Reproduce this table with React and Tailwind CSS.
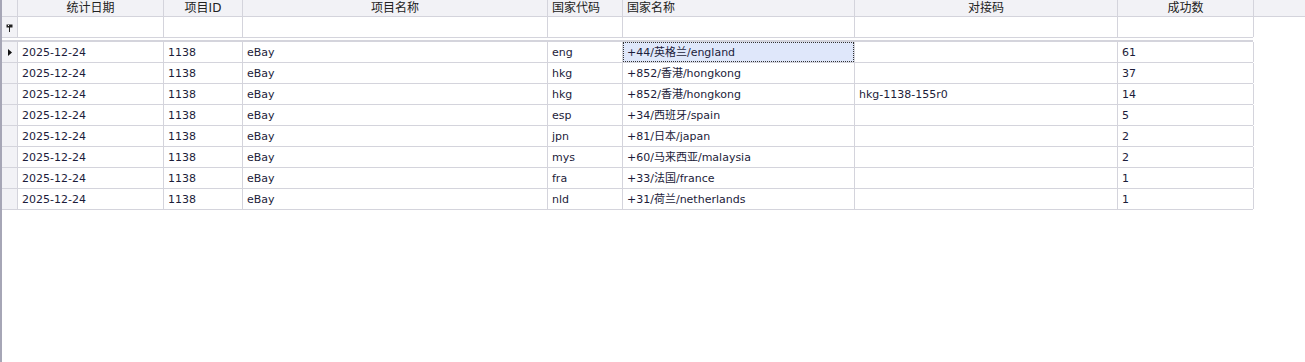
import React from "react";

const columns = [
  { key: "date", title: "统计日期", width: "w-[146px]", align: "text-center" },
  { key: "pid", title: "项目ID", width: "w-[79px]", align: "text-center" },
  { key: "pname", title: "项目名称", width: "w-[305px]", align: "text-center" },
  { key: "code", title: "国家代码", width: "w-[75px]", align: "text-left" },
  { key: "country", title: "国家名称", width: "w-[232px]", align: "text-left" },
  { key: "dock", title: "对接码", width: "w-[263px]", align: "text-center" },
  { key: "count", title: "成功数", width: "w-[136px]", align: "text-center" },
];

const rows = [
  ["2025-12-24", "1138", "eBay", "eng", "+44/英格兰/england", "", "61"],
  ["2025-12-24", "1138", "eBay", "hkg", "+852/香港/hongkong", "", "37"],
  ["2025-12-24", "1138", "eBay", "hkg", "+852/香港/hongkong", "hkg-1138-155r0", "14"],
  ["2025-12-24", "1138", "eBay", "esp", "+34/西班牙/spain", "", "5"],
  ["2025-12-24", "1138", "eBay", "jpn", "+81/日本/japan", "", "2"],
  ["2025-12-24", "1138", "eBay", "mys", "+60/马来西亚/malaysia", "", "2"],
  ["2025-12-24", "1138", "eBay", "fra", "+33/法国/france", "", "1"],
  ["2025-12-24", "1138", "eBay", "nld", "+31/荷兰/netherlands", "", "1"],
];

const font = { fontFamily: '"DejaVu Sans", "Noto Sans CJK SC", sans-serif' };

function FilterPin() {
  return (
    <svg width="7" height="8" viewBox="0 0 7 8">
      <rect x="0.5" y="0.5" width="6" height="3" fill="#222" />
      <rect x="2" y="1" width="1" height="1" fill="#fff" />
      <rect x="3" y="3" width="1" height="5" fill="#222" />
    </svg>
  );
}

function RowArrow() {
  return (
    <svg width="4" height="7" viewBox="0 0 4 7">
      <path d="M0 0 L4 3.5 L0 7 Z" fill="#111" />
    </svg>
  );
}

export default function App() {
  return (
    <div className="flex h-[362px] w-[1305px] bg-white text-[11px] text-[#1c1c3a]" style={font}>
      <div className="w-[2px] shrink-0 bg-[#a6a6b6]" />
      <div className="flex flex-1 flex-col">
        {/* header */}
        <div className="flex h-[17px] border-b border-[#d4d4dc] bg-[#f2f2f6]">
          <div className="w-[16px] shrink-0 border-r border-[#d4d4dc]" />
          {columns.map((c) => (
            <div
              key={c.key}
              className={`${c.width} ${c.align} shrink-0 border-r border-[#d4d4dc] px-[4px] text-[12px] leading-[16px] text-[#222]`}
            >
              {c.title}
            </div>
          ))}
          <div className="flex-1" />
        </div>

        {/* filter row + data */}
        <div className="flex">
          <div className="flex w-[1251px] flex-col">
            <div className="flex h-[21px] border-b border-[#d4d4dc]">
              <div className="flex w-[16px] shrink-0 items-center justify-center border-r border-[#d4d4dc] bg-[#f2f2f6] pt-[1px]">
                <FilterPin />
              </div>
              {columns.map((c) => (
                <div key={c.key} className={`${c.width} shrink-0 border-r border-[#d4d4dc]`} />
              ))}
            </div>
            <div className="h-[2px]" />
            <div className="h-[2px] bg-[#d4d4dc]" />

            {rows.map((r, i) => (
              <div key={i} className="flex h-[21px] border-b border-[#d4d4dc]">
                <div className="flex w-[16px] shrink-0 items-center justify-center border-r border-[#d4d4dc] bg-[#f2f2f6]">
                  {i === 0 && <RowArrow />}
                </div>
                {r.map((v, j) => {
                  const selected = i === 0 && j === 4;
                  return (
                    <div
                      key={j}
                      className={`${columns[j].width} shrink-0 border-r border-[#d4d4dc] leading-[20px]`}
                    >
                      {selected ? (
                        <div className="h-[20px] border border-dotted border-[#333] bg-[#dfe7fa] px-[3px] pt-[1px] leading-[18px]">
                          {v}
                        </div>
                      ) : (
                        <div className="whitespace-nowrap px-[4px] pt-[2px] leading-[18px]">{v}</div>
                      )}
                    </div>
                  );
                })}
              </div>
            ))}
          </div>
        </div>
      </div>
    </div>
  );
}
